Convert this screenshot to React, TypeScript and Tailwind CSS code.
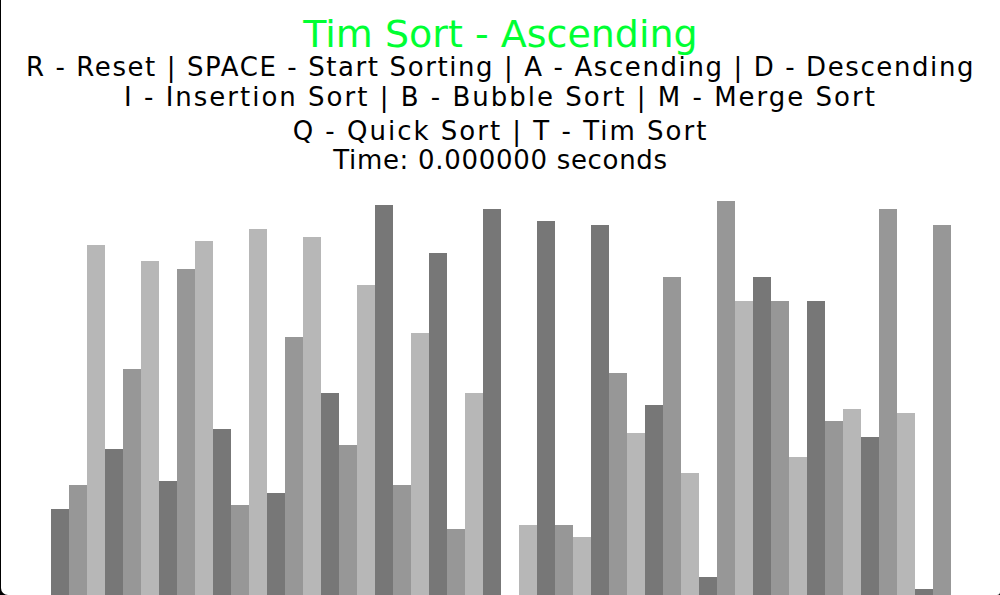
import React from 'react';

const heights = [
  86, 110, 350, 146, 226, 334, 114, 326, 354, 166, 90, 366, 102, 258, 358, 202, 150, 310, 390, 110, 262, 342, 66, 202,
  386, 0, 70, 374, 70, 58, 370, 222, 162, 190, 318, 122, 18, 394, 294, 318, 294, 138, 294, 174, 186, 158, 386, 182, 6,
  370,
];

// bar shade cycles dark / mid / light
const shades = ['bg-[#777777]', 'bg-[#979797]', 'bg-[#b7b7b7]'];

export default function App() {
  return (
    <div className="w-[1000px] h-[595px] bg-black overflow-hidden">
      <div
        className="ml-[1px] h-full bg-white rounded-bl-[7px] rounded-br-[3px] flex flex-col text-black"
        style={{ fontFamily: '"DejaVu Sans", sans-serif' }}
      >
        <div className="pt-[14px] flex flex-col items-center text-[26px] leading-[30px]">
          <div className="h-[40px] leading-[40px] text-[38px] text-[#00ff33]">Tim Sort - Ascending</div>
          <div className="h-[30px] -mt-[2px] tracking-[1.6px]">
            R - Reset | SPACE - Start Sorting | A - Ascending | D - Descending
          </div>
          <div className="h-[34px] tracking-[2px]">I - Insertion Sort | B - Bubble Sort | M - Merge Sort</div>
          <div className="h-[29px] tracking-[2px]">Q - Quick Sort | T - Tim Sort</div>
          <div className="h-[30px] tracking-[0.7px]">Time: 0.000000 seconds</div>
        </div>
        <div className="flex-1 flex items-end pl-[50px]">
          {heights.map((h, i) => (
            <div key={i} className={`w-[18px] shrink-0 ${shades[i % 3]}`} style={{ height: h }} />
          ))}
        </div>
      </div>
    </div>
  );
}
